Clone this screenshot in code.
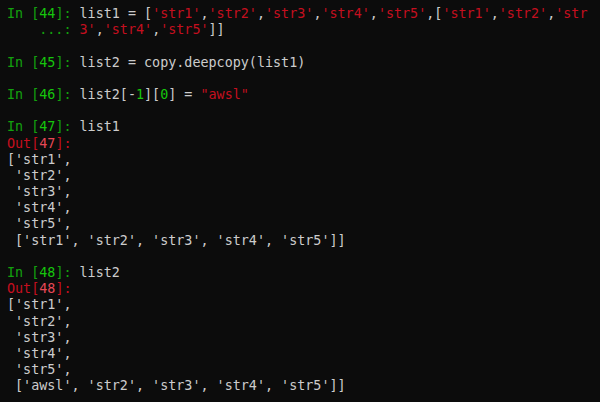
import type React from "react";
import type { ReactElement } from "react";

type Seg = [string, string];

const W = "text-[#cccccc]";
const G = "text-[#13a10e]";
const GB = "text-[#16c60c]";
const R = "text-[#c50f1f]";
const RB = "text-[#e74856]";

const inPrompt = (n: string): Seg[] => [
  ["In [", G],
  [n, GB],
  ["]: ", G],
];

const outPrompt = (n: string): Seg[] => [
  ["Out[", R],
  [n, RB],
  ["]:", R],
];

const listOut = (first: string): Seg[][] => [
  [["['str1',", W]],
  [[" 'str2',", W]],
  [[" 'str3',", W]],
  [[" 'str4',", W]],
  [[" 'str5',", W]],
  [[` ['${first}', 'str2', 'str3', 'str4', 'str5']]`, W]],
];

const lines: Seg[][] = [
  [
    ...inPrompt("44"),
    ["list1 = [", W],
    ["'str1'", R],
    [",", W],
    ["'str2'", R],
    [",", W],
    ["'str3'", R],
    [",", W],
    ["'str4'", R],
    [",", W],
    ["'str5'", R],
    [",[", W],
    ["'str1'", R],
    [",", W],
    ["'str2'", R],
    [",", W],
    ["'str", R],
  ],
  [
    ["    ...: ", G],
    ["3'", R],
    [",", W],
    ["'str4'", R],
    [",", W],
    ["'str5'", R],
    ["]]", W],
  ],
  [],
  [...inPrompt("45"), ["list2 = copy.deepcopy(list1)", W]],
  [],
  [
    ...inPrompt("46"),
    ["list2[-", W],
    ["1", GB],
    ["][", W],
    ["0", GB],
    ["] = ", W],
    ['"awsl"', R],
  ],
  [],
  [...inPrompt("47"), ["list1", W]],
  outPrompt("47"),
  ...listOut("str1"),
  [],
  [...inPrompt("48"), ["list2", W]],
  outPrompt("48"),
  ...listOut("awsl"),
];

const App: React.FC = (): ReactElement => {
  return (
    <div className="w-[600px] h-[402px] overflow-hidden bg-[#0c0c0c] pl-[7px] pt-[6px]">
      <div className="font-['DejaVu_Sans_Mono',monospace] text-[13.4px] leading-[16.2px] whitespace-pre">
        {lines.map((segs, i) => (
          <div key={i} className="h-[16.2px]">
            {segs.map(([t, c], j) => (
              <span key={j} className={c}>
                {t}
              </span>
            ))}
          </div>
        ))}
      </div>
    </div>
  );
};

export default App;
